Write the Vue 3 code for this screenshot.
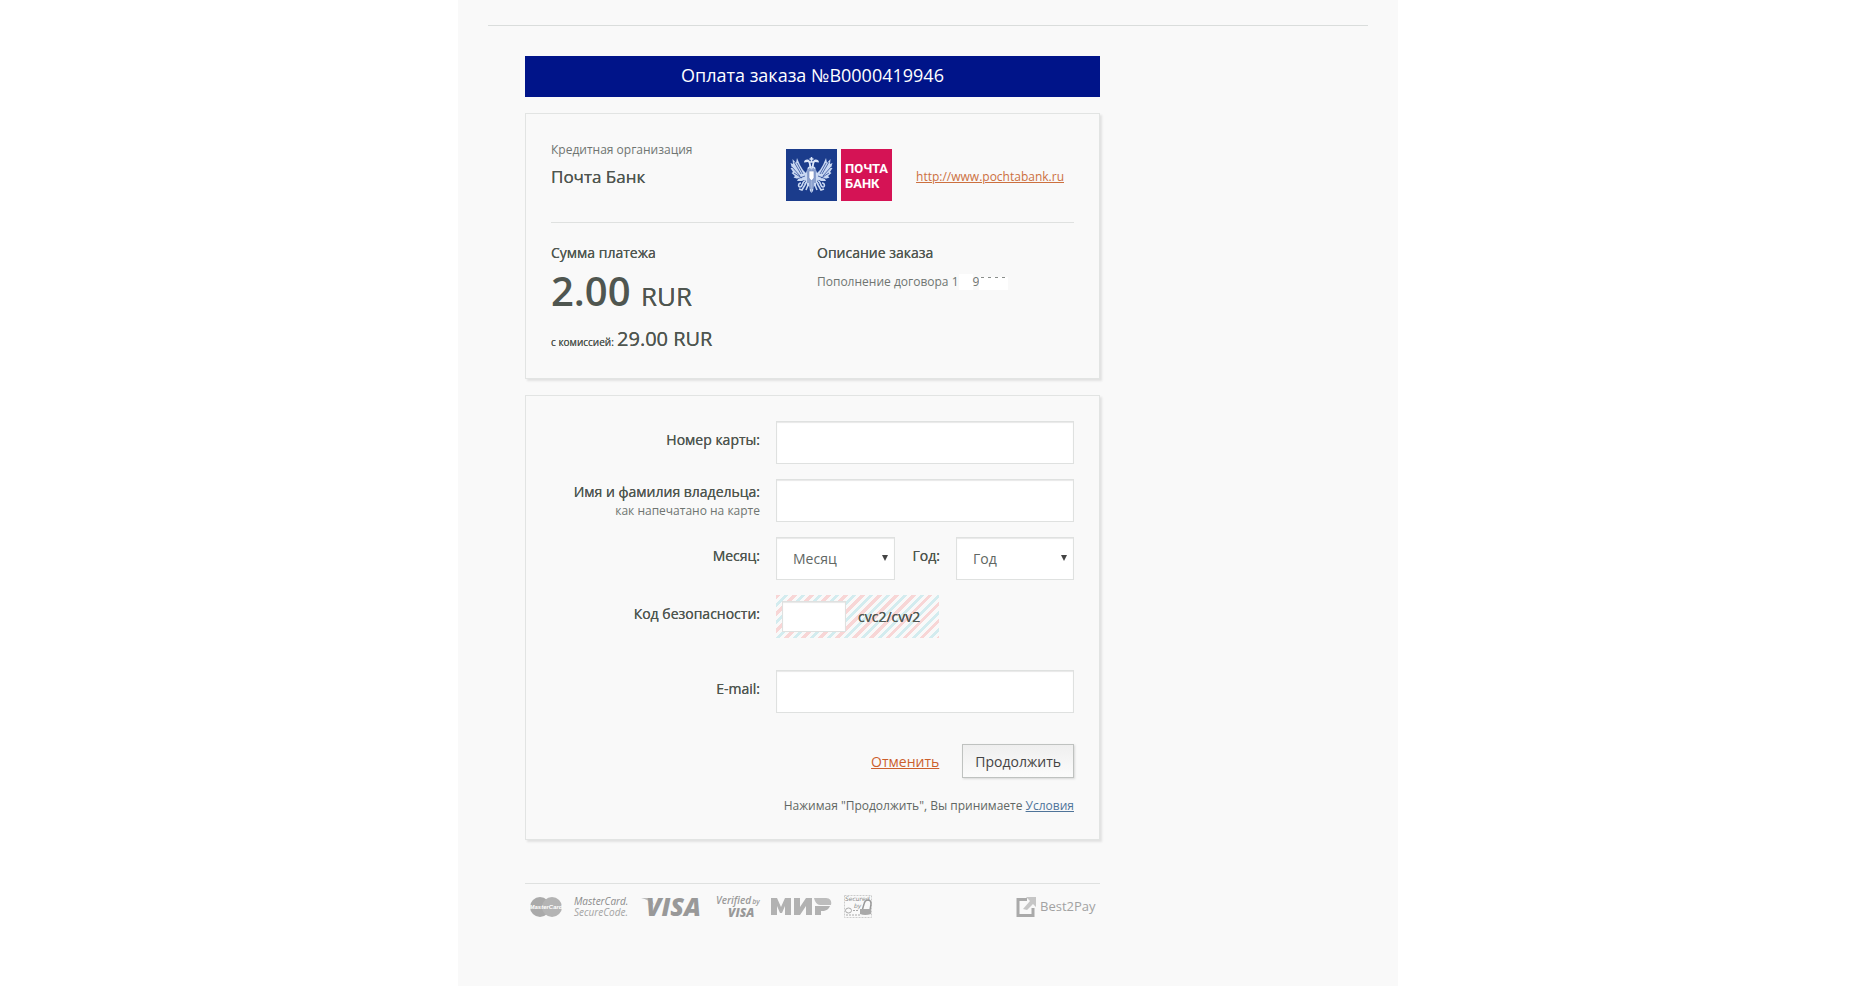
<template>
  <div class="page">
    <div class="sheet">
      <hr class="sheet-line" />
      <main class="payment">
        <h1 class="title">Оплата заказа №B0000419946</h1>

        <section class="card order">
          <div class="bank">
            <div class="bank-name">
              <p class="note">Кредитная организация</p>
              <p class="name">Почта Банк</p>
            </div>
            <svg class="bank-logo" viewBox="0 0 106 52" role="img" aria-label="Почта Банк">
              <rect width="51" height="52" fill="#1b3c8c" />
              <rect x="55" width="51" height="52" fill="#d51355" />
              <!-- eagle: right half is the mirrored left half -->
              <defs>
                <g id="half">
                  <path d="M25.5 17 22 18 20 24 17 21 14 16 11 9 10 14 6.500 10 7 15 4.500 14 6 19 4.500 19 7 23 5.500 24 9 27 7.500 28.500 12 30 11 32 16 32 18 31 20 32 18 35 21 34 21 38 23 37 24 42 25.500 44Z" fill="#c9d8f2" />
                  <path d="M8 13 15 25M6 18 14 27M8 24 16 29M11 14 17 25M11 30 19 27M22 20V34M24 19V40" stroke="#1b3c8c" stroke-width="0.700" fill="none" />
                  <path d="M25.500 20C22 19 24 15 22 13L18 13.500C18 11 20 10 22 10.500 24 11 24.500 14 25 16" fill="#dce6f8" />
                  <path d="M19 32C16 32 17 38 14 38 12 38 12 34 15 34M20 34 16 41 13 40M22 36 20 41" stroke="#c9d8f2" stroke-width="1.600" fill="none" />
                </g>
              </defs>
              <use href="#half" />
              <use href="#half" transform="translate(51 0) scale(-1 1)" />
              <path d="M25.500 8v5M23.500 10h4M23 13h5" stroke="#dce6f8" stroke-width="1.500" />
              <path d="M23 22h5v7l-2.500 3-2.500-3z" fill="#fff" stroke="#6b85bd" stroke-width="0.600" />
              <text x="59" y="24" class="bank-word">ПОЧТА</text>
              <text x="59" y="39" class="bank-word">БАНК</text>
            </svg>
            <a class="bank-link" href="http://www.pochtabank.ru">http://www.pochtabank.ru</a>
          </div>

          <div class="details">
            <div>
              <h2 class="caption">Сумма платежа</h2>
              <p class="sum">2.00 <span class="currency">RUR</span></p>
              <p class="fee"><span class="fee-label">с комиссией:</span> 29.00 RUR</p>
            </div>
            <div>
              <h2 class="caption">Описание заказа</h2>
              <p class="note about">
                Пополнение договора 1<span class="mask"></span>9<span class="mask wide"></span>
              </p>
            </div>
          </div>
        </section>

        <form class="card form" @submit.prevent>
          <div class="row">
            <label class="label" for="number">Номер карты:</label>
            <input id="number" v-model="form.number" class="field" type="text" />
          </div>
          <div class="row">
            <label class="label two-lines" for="holder">
              Имя и фамилия владельца:
              <small class="hint">как напечатано на карте</small>
            </label>
            <input id="holder" v-model="form.holder" class="field" type="text" />
          </div>
          <div class="row">
            <label class="label" for="month">Месяц:</label>
            <div class="dates">
              <div class="select">
                <select id="month" v-model="form.month" class="field">
                  <option value="">Месяц</option>
                  <option v-for="m in months" :key="m" :value="m">{{ m }}</option>
                </select>
              </div>
              <label class="label" for="year">Год:</label>
              <div class="select">
                <select id="year" v-model="form.year" class="field">
                  <option value="">Год</option>
                  <option v-for="y in years" :key="y" :value="y">{{ y }}</option>
                </select>
              </div>
            </div>
          </div>
          <div class="row">
            <label class="label" for="cvc">Код безопасности:</label>
            <div class="cvc">
              <input id="cvc" v-model="form.cvc" class="field cvc-field" type="password" maxlength="3" />
              <span>cvc2/cvv2</span>
            </div>
          </div>
          <div class="row email">
            <label class="label" for="email">E-mail:</label>
            <input id="email" v-model="form.email" class="field" type="email" />
          </div>
          <div class="actions">
            <a class="cancel" href="#">Отменить</a>
            <button class="submit" type="submit">Продолжить</button>
          </div>
          <p class="terms">
            Нажимая "Продолжить", Вы принимаете <a href="#">Условия</a>
          </p>
        </form>

        <footer class="logos">
          <svg width="32" height="20" viewBox="0 0 32 20" role="img" aria-label="MasterCard">
            <circle cx="10" cy="10" r="10" fill="#aaa" />
            <circle cx="22" cy="10" r="10" fill="#b4b4b4" />
            <text x="16" y="12" text-anchor="middle" class="mc">MasterCard</text>
          </svg>
          <svg width="55" height="22" viewBox="0 0 55 22" role="img" aria-label="MasterCard SecureCode">
            <text x="0" y="9" class="secure-code top">MasterCard.</text>
            <text x="0" y="20" class="secure-code">SecureCode.</text>
          </svg>
          <svg width="62" height="20" viewBox="0 0 62 20" role="img" aria-label="VISA">
            <path d="M0 1h10l3 7C9 4 5 2 0 1z" fill="#bbb" />
            <text x="5" y="19" class="visa">VISA</text>
          </svg>
          <svg width="44" height="22" viewBox="0 0 44 22" role="img" aria-label="Verified by VISA">
            <text x="1" y="8" class="verified">Verified<tspan class="by" dx="1">by</tspan></text>
            <text x="13" y="21" class="verified-visa">VISA</text>
          </svg>
          <svg width="61" height="20" viewBox="0 0 61 20" role="img" aria-label="МИР">
            <path d="M0 18V1h6l4 9 4-9h6v17h-6V9l-3 7h-2l-3-7v9zM23 18V1h6v9l6-9h6v17h-6V9l-6 9zM44 18V9h15c-1 3-4 5-8 5h-1v4z" fill="#b2b2b2" />
            <path d="M43 1h12c4 0 6 3 5 7H49c-3 0-5-3-6-7z" fill="#bdbdbd" />
          </svg>
          <svg width="28" height="24" viewBox="0 0 28 24" role="img" aria-label="Secured by">
            <path d="M.5.500h27v22H.500z" fill="none" stroke="#ccc" stroke-dasharray="2 1" />
            <text x="1" y="6" class="secured">Secured</text>
            <text x="10" y="13" class="secured">by</text>
            <path d="M18 16 20 9q1-4 4-4t3 4l-1 6" fill="none" stroke="#999" stroke-width="1.500" />
            <path d="M16 14h11v5q-6 2-11 0z" fill="#aaa" />
            <ellipse cx="4.500" cy="15.500" rx="3" ry="2.500" fill="none" stroke="#aaa" />
            <path d="M9 15.500h6M2 20h14" stroke="#aaa" stroke-dasharray="2 1" />
          </svg>
          <svg class="best2pay" width="79" height="22" viewBox="0 0 79 22" role="img" aria-label="Best2Pay">
            <path d="M11 3.500H2v16h15V12" fill="none" stroke="#aaa" stroke-width="3" />
            <path d="M10 1h10v10l-3-3-6 6-4-1 7-8z" fill="#c6c6c6" />
            <text x="24" y="15" class="b2p">Best2Pay</text>
          </svg>
        </footer>
      </main>
    </div>
  </div>
</template>

<script setup>
import { reactive } from 'vue'

const form = reactive({
  number: '',
  holder: '',
  month: '',
  year: '',
  cvc: '',
  email: ''
})

const months = Array.from({ length: 12 }, (_, i) => String(i + 1).padStart(2, '0'))
const years = Array.from({ length: 10 }, (_, i) => 2017 + i)
</script>

<style>
body {
  background: #fff;
}
</style>

<style scoped>
.page {
  display: flex;
  justify-content: center;
  padding-right: 6px;
  font-family: 'Open Sans', sans-serif;
  font-size: 14px;
  color: #4f5650;
}

.sheet {
  box-sizing: border-box;
  width: 100%;
  max-width: 940px;
  min-height: 100vh;
  padding: 25px 30px 0;
  background: #f9f9f9;
}

.sheet-line {
  margin: 0;
  border: 0;
  border-top: 1px solid #dadddc;
}

.payment {
  max-width: 575px;
  margin: 30px 0 0 37px;
}

h1,
h2,
p {
  margin: 0;
}

.title {
  padding-bottom: 2px;
  background: #001489;
  color: #fff;
  font-size: 18px;
  font-weight: 400;
  line-height: 39px;
  text-align: center;
}

.card {
  margin-top: 16px;
  padding: 25px;
  border: 1px solid #e2e4e3;
  box-shadow: 2px 2px 2px #e2e2e2;
}

.form {
  padding-bottom: 24px;
}

.note {
  font-size: 12px;
  line-height: 22px;
  color: #6f7571;
}

/* a zero-blur shadow thickens the strokes without changing the widths */
.name,
.caption,
.fee,
.label,
.cvc {
  font-weight: 500;
  text-shadow: 0 0 0 currentColor;
}

.bank {
  display: flex;
  align-items: center;
  padding: 10px 10px 21px 0;
  border-bottom: 1px solid #dfe1e0;
}

.bank-name {
  flex: 1;
  align-self: flex-start;
  margin-top: -10px;
}

.name {
  font-size: 17px;
  line-height: 32px;
}

.bank-logo {
  width: 106px;
  height: 52px;
}

.bank-word {
  fill: #fff;
  font: bold 13px Roboto, sans-serif;
}

.bank-link {
  margin-left: 24px;
  padding-top: 2px;
  font-size: 12px;
  color: #cc703f;
}

.details {
  display: grid;
  grid-template-columns: 266px 1fr;
  padding-top: 20px;
}

.caption {
  font-size: 14px;
  line-height: 20px;
}

.about {
  margin-top: 8px;
}

.mask {
  display: inline-block;
  width: 14px;
  height: 16px;
  background: #fff;
  vertical-align: text-bottom;
}

/* only the tops of the hidden digits are left visible */
.mask.wide {
  width: 29px;
  height: 13px;
  background:
    repeating-linear-gradient(90deg, transparent 0 2px, #8a8e8b 2px 5px, transparent 5px 7px) 0 0 / 100% 1px no-repeat,
    #fff;
}

.sum {
  font-size: 40px;
  font-weight: 600;
  line-height: 56px;
}

.currency {
  font-size: 26px;
  font-weight: 500;
  line-height: 1;
  text-shadow: 0 0 0 currentColor;
}

.fee {
  margin-top: 6px;
  font-size: 20px;
  line-height: 28px;
}

.fee-label {
  margin-right: -2px;
  font-size: 10px;
  line-height: 1;
}

.row {
  display: grid;
  grid-template-columns: 1fr 298px;
  column-gap: 16px;
  margin-bottom: 15px;
}

.label {
  line-height: 18px;
  padding-top: 10px;
  text-align: right;
}

.two-lines {
  padding-top: 4px;
}

.hint {
  display: block;
  font-size: 12px;
  line-height: 20px;
  font-weight: 400;
  color: #6f7571;
  text-shadow: none;
}

.field {
  box-sizing: border-box;
  width: 100%;
  height: 43px;
  padding: 0 16px;
  border: 1px solid #dfe1e0;
  border-radius: 0;
  background: #fff;
  box-shadow: inset 0 1px 1px #e8e8e8;
  color: #616763;
  font: 400 14px 'Open Sans', sans-serif;
  appearance: none;
}

.dates {
  display: grid;
  grid-template-columns: 119px 1fr 118px;
  column-gap: 16px;
}

.select {
  position: relative;
}

.select::after {
  content: '';
  position: absolute;
  top: 18px;
  right: 7px;
  border: 3px solid transparent;
  border-top: 6px solid #444;
  border-bottom: 0;
  pointer-events: none;
}

.cvc {
  display: flex;
  align-items: center;
  box-sizing: border-box;
  width: 163px;
  height: 43px;
  padding: 0 6px;
  gap: 12px;
  background: repeating-linear-gradient(
    135deg,
    #f8d6d6 0 3px,
    #f9f9f9 3px 6px,
    #d3ecef 6px 9px,
    #f9f9f9 9px 12px
  );
}

.cvc-field {
  width: 64px;
  height: 31px;
}

.email {
  margin-top: 32px;
}

.actions {
  display: flex;
  align-items: center;
  justify-content: flex-end;
  gap: 23px;
  margin-top: 31px;
}

.cancel {
  color: #cc5f2c;
}

.submit {
  height: 34px;
  padding: 0 12px;
  border: 1px solid #bfc2c0;
  background: linear-gradient(#efefef, #fbfbfb);
  box-shadow: 1px 1px 2px #d8d8d8;
  color: #444;
  font: 400 14px 'Open Sans', sans-serif;
}

.terms {
  margin-top: 19px;
  font-size: 12px;
  line-height: 18px;
  color: #616763;
  text-align: right;
}

.terms a {
  color: #4f7499;
}

.logos {
  display: flex;
  align-items: center;
  gap: 12px;
  margin-top: 43px;
  padding: 11px 5px;
  border-top: 1px solid #dfe1e0;
}

.logos svg {
  overflow: visible;
}

.best2pay {
  margin-left: auto;
}

.mc {
  fill: #fff;
  font: italic bold 6px 'Liberation Sans', sans-serif;
}

.secure-code {
  fill: #a4a4a4;
  font: italic 400 10px 'Open Sans', sans-serif;
}

.secure-code.top {
  fill: #8c8c8c;
}

.visa {
  fill: #999;
  font: italic 800 25px 'Open Sans', sans-serif;
}

.verified {
  fill: #999;
  font: italic 600 10px 'Open Sans', sans-serif;
}

.by {
  font-size: 7px;
}

.verified-visa {
  fill: #999;
  font: italic 800 12px 'Open Sans', sans-serif;
}

.secured {
  fill: #888;
  font: italic 6px 'DejaVu Sans', sans-serif;
}

.b2p {
  fill: #a2a2a2;
  font: 400 13px 'Open Sans', sans-serif;
}
</style>
